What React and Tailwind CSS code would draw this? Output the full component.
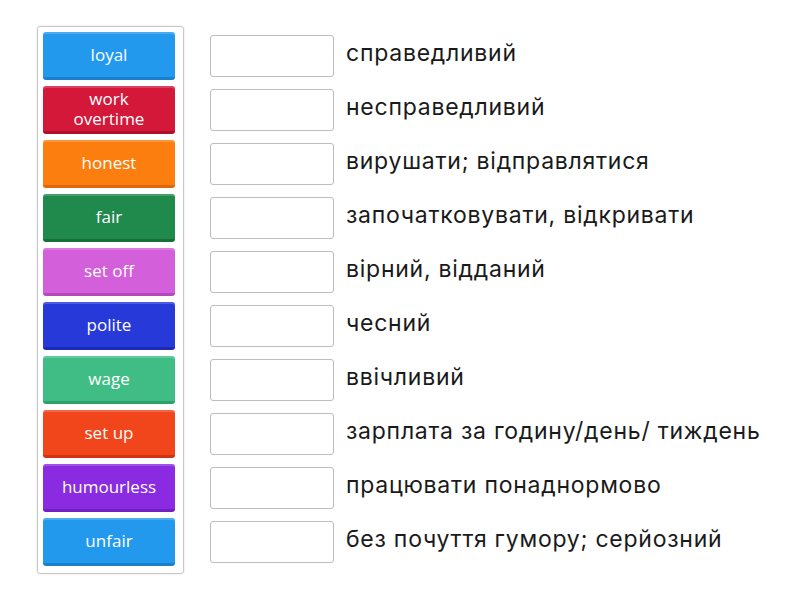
import React from "react";

const tiles = [
  { label: "loyal", cls: "bg-[#2399ee] border-[#1a7fcc]" },
  { label: "work overtime", cls: "bg-[#d4183a] border-[#b00f2c]" },
  { label: "honest", cls: "bg-[#fb7e0e] border-[#e0680a]" },
  { label: "fair", cls: "bg-[#1f8a4c] border-[#17703c]" },
  { label: "set off", cls: "bg-[#d45fdb] border-[#b548bd]" },
  { label: "polite", cls: "bg-[#2739d8] border-[#1b2bb5]" },
  { label: "wage", cls: "bg-[#3fbd84] border-[#2fa06d]" },
  { label: "set up", cls: "bg-[#f1451b] border-[#d03510]" },
  { label: "humourless", cls: "bg-[#8a2be2] border-[#7020c2]" },
  { label: "unfair", cls: "bg-[#2399ee] border-[#1a7fcc]" },
];

const answers = [
  "справедливий",
  "несправедливий",
  "вирушати; відправлятися",
  "започатковувати, відкривати",
  "вірний, відданий",
  "чесний",
  "ввічливий",
  "зарплата за годину/день/ тиждень",
  "працювати понаднормово",
  "без почуття гумору; серйозний",
];

export default function App() {
  return (
    <div className="w-[800px] h-[600px] bg-white flex items-start pt-[26px] pl-[37px]">
      <div className="w-[147px] border border-[#c8c8c8] rounded-[3px] pt-[5px] pb-[7px] pl-[5px] flex flex-col gap-[6px] shadow-[0_0_2px_rgba(0,0,0,0.15)]">
        {tiles.map((t) => (
          <div
            key={t.label}
            className={`w-[132px] h-[48px] rounded-[3px] border-b-[3px] flex items-center justify-center text-center text-white text-[17px] leading-[20px] px-[14px] pt-[1px] shadow-[inset_0_2px_0_rgba(255,255,255,0.18)] ${t.cls}`}
            style={{ fontFamily: "'Open Sans', Lato, sans-serif" }}
          >
            {t.label}
          </div>
        ))}
      </div>
      <div className="ml-[26px] pt-[6px] flex flex-col gap-[6px]">
        {answers.map((a) => (
          <div key={a} className="h-[48px] flex items-center gap-[12px]">
            <div className="w-[124px] h-[42px] border border-[#bdbdbd] rounded-[3px] bg-white" />
            <span
              className="text-[23px] tracking-[0.75px] text-[#1a1a1a] whitespace-nowrap pb-[5px]"
              style={{ fontFamily: "Inter, Roboto, sans-serif" }}
            >
              {a}
            </span>
          </div>
        ))}
      </div>
    </div>
  );
}
